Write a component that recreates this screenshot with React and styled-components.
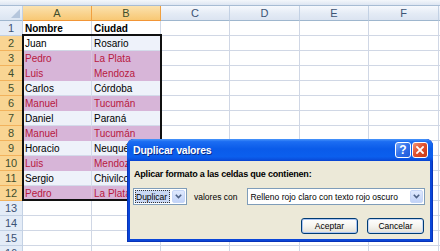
import React from "react"
import styled, {createGlobalStyle, css} from "styled-components"

const GlobalStyle = createGlobalStyle`
    html, body {
        margin: 0;
        padding: 0;
        background: #fff;
    }
    body {
        width: 440px;
        height: 251px;
        overflow: hidden;
        font-family: "Liberation Sans", Arial, sans-serif;
    }
`

const Sheet = styled.div`
    position: relative;
    width: 440px;
    height: 251px;
    overflow: hidden;
    display: flex;
    flex-direction: column;
`

const FormulaEdge = styled.div`
    flex: none;
    height: 5px;
    background: linear-gradient(#f4f7fb, #dde6f2);
    border-bottom: 1px solid #a7bcd4;
`

const Grid = styled.div`
    display: grid;
    grid-template-columns: 23px 69px 69px 69px 70px 69px 70px 1fr;
    grid-auto-rows: 15px;
`

const headerBase = css`
    box-sizing: border-box;
    display: flex;
    align-items: center;
    justify-content: center;
    font-size: 11px;
    overflow: hidden;
    color: ${p => (p.$active ? "#3f4e2c" : "#3d5375")};
    border-right: 1px solid ${p => (p.$active ? "#f0a040" : "#c3d1e4")};
    border-bottom: 1px solid ${p => (p.$active ? "#f29536" : "#9eb6ce")};
`

const Corner = styled.div`
    ${headerBase};
    position: relative;
    background: linear-gradient(#eef3fa, #dbe5f2);
    &::after {
        content: "";
        position: absolute;
        right: 2px;
        bottom: 2px;
        border-style: solid;
        border-width: 0 0 9px 9px;
        border-color: transparent transparent #b5c6dc transparent;
    }
`

const ColHeader = styled.div`
    ${headerBase};
    background: ${p =>
        p.$active
            ? "linear-gradient(#fbe2ae, #f9d38e 55%, #f8c874)"
            : "linear-gradient(#f6f9fd, #e4ebf5 55%, #dbe4f1)"};
`

const RowHeader = styled.div`
    ${headerBase};
    border-bottom-color: ${p => (p.$active ? "#f2b25c" : "#c3d1e4")};
    background: ${p => (p.$active ? "#f9d593" : "#e4ecf7")};
`

const fills = {
    white: {bg: "#ffffff", line: "#d0d7e5"},
    tint: {bg: "#eef2fa", line: "#d3dbea"},
    pink: {bg: "#d7b5d8", line: "#d7b5d8"}
}

const Cell = styled.div`
    box-sizing: border-box;
    display: flex;
    align-items: center;
    padding: 1px 0 0 2px;
    font-size: 10px;
    white-space: nowrap;
    overflow: hidden;
    font-weight: ${p => (p.$bold ? 700 : 400)};
    color: ${p => (p.$red ? "#b8193f" : "#000")};
    background: ${p => fills[p.$fill].bg};
    border-bottom: 1px solid ${p => fills[p.$fill].line};
    border-right: 1px solid ${p => (p.$fill === "pink" ? "#dbc4dd" : fills[p.$fill].line)};
`

const Selection = styled.div`
    position: absolute;
    left: 22px;
    top: 34px;
    width: 140px;
    height: 167px;
    box-sizing: border-box;
    border: 2px solid #101010;
    pointer-events: none;
`

const Dialog = styled.div`
    position: absolute;
    left: 127px;
    top: 139px;
    width: 306px;
    height: 103px;
    box-sizing: border-box;
    display: flex;
    flex-direction: column;
    padding: 0 3px 3px;
    background: #0a46d8;
    border-radius: 7px 7px 0 0;
    box-shadow: inset 1px 0 0 #0733b8, inset -1px 0 0 #0733b8, inset 0 -1px 0 #0733b8;
`

const TitleBar = styled.div`
    flex: none;
    height: 22px;
    margin: 0 -3px;
    padding: 0 5px 0 6px;
    display: flex;
    align-items: center;
    border-radius: 7px 7px 0 0;
    background: linear-gradient(#4a96fb 0%, #1c6df2 12%, #0a5be9 45%, #0b5fee 80%, #0a52e0 92%, #0841cf 100%);
`

const Title = styled.div`
    flex: 1;
    color: #fff;
    font-weight: 700;
    font-size: 10.5px;
    letter-spacing: -0.2px;
    text-shadow: 1px 1px 0 #0a2c8a;
`

const TitleButtons = styled.div`
    display: flex;
    gap: 1px;
`

const CapButton = styled.div`
    width: 16px;
    height: 16px;
    box-sizing: border-box;
    border: 1px solid #fff;
    border-radius: 3px;
    display: flex;
    align-items: center;
    justify-content: center;
    color: #fff;
    font-weight: 700;
    font-size: 12px;
    background: ${p =>
        p.$close
            ? "linear-gradient(135deg, #f0957a, #e0512f 45%, #c93a16)"
            : "linear-gradient(135deg, #7eaaf8, #3473ec 45%, #2059d8)"};
`

const Body = styled.div`
    flex: 1;
    background: #ece9d8;
    padding: 8px 5px 0 3px;
    display: flex;
    flex-direction: column;
`

const Prompt = styled.div`
    margin-left: 1px;
    height: 12px;
    font-size: 9px;
    font-weight: 700;
    letter-spacing: -0.2px;
    white-space: nowrap;
    color: #000;
`

const Controls = styled.div`
    margin-top: 7px;
    display: flex;
    align-items: center;
    height: 17px;
`

const Combo = styled.div`
    flex: none;
    box-sizing: border-box;
    width: ${p => p.$width}px;
    height: 17px;
    margin-left: ${p => p.$offset || 0}px;
    border: 1px solid #7f9db9;
    background: #fff;
    display: flex;
    align-items: center;
    padding: 1px;
`

const ComboText = styled.div`
    flex: 1;
    font-size: 8.5px;
    color: #000;
    padding-left: 1px;
    white-space: nowrap;
    overflow: hidden;
`

const FocusText = styled.div`
    flex: 1;
    height: 100%;
    box-sizing: border-box;
    display: flex;
    align-items: center;
    font-size: 8.5px;
    color: #000;
    background: #c9d8f4;
    outline: 1px dotted #333;
    outline-offset: -1px;
    padding-left: 1px;
    margin-right: 2px;
`

const Arrow = styled.div`
    flex: none;
    width: 13px;
    height: 13px;
    box-sizing: border-box;
    border-radius: 2px;
    border: 1px solid #c6d6f7;
    background: linear-gradient(#dfe9fd, #c2d3f8);
    display: flex;
    align-items: center;
    justify-content: center;
`

const Label = styled.div`
    flex: none;
    margin-left: 7px;
    font-size: 8.5px;
    white-space: nowrap;
    color: #000;
`

const Actions = styled.div`
    margin-top: 13px;
    padding-right: 1px;
    display: flex;
    justify-content: flex-end;
    gap: 9px;
`

const Button = styled.div`
    width: 57px;
    height: 16px;
    box-sizing: border-box;
    border: 1px solid #003c74;
    border-radius: 3px;
    display: flex;
    align-items: center;
    justify-content: center;
    font-size: 8.5px;
    color: #000;
    background: linear-gradient(#ffffff, #f5f4ef 50%, #e6e4dc 90%, #d8d4c8);
    box-shadow: inset 0 0 0 1px ${p => (p.$default ? "#a9c4f4" : "#c4d6f6")};
`

const Chevron = () => (
    <svg width="7" height="5" viewBox="0 0 7 5">
        <polyline points="0.8,0.8 3.5,3.6 6.2,0.8" fill="none" stroke="#4d6185" strokeWidth="1.6" />
    </svg>
)

const Cross = () => (
    <svg width="8" height="8" viewBox="0 0 8 8">
        <path d="M1 1 L7 7 M7 1 L1 7" stroke="#fff" strokeWidth="1.8" strokeLinecap="square" />
    </svg>
)

const columns = ["A", "B", "C", "D", "E", "F"]

const people = [
    ["Nombre", "Ciudad"],
    ["Juan", "Rosario"],
    ["Pedro", "La Plata"],
    ["Luis", "Mendoza"],
    ["Carlos", "Córdoba"],
    ["Manuel", "Tucumán"],
    ["Daniel", "Paraná"],
    ["Manuel", "Tucumán"],
    ["Horacio", "Neuquén"],
    ["Luis", "Mendoza"],
    ["Sergio", "Chivilcoy"],
    ["Pedro", "La Plata"]
]

const duplicates = [3, 4, 6, 8, 10, 12]

const App = () => {
    const rows = Array.from({length: 16}, (_, i) => i + 1)

    return (
        <Sheet>
            <GlobalStyle />
            <FormulaEdge />
            <Grid>
                <Corner />
                {columns.map(c => (
                    <ColHeader key={c} $active={c === "A" || c === "B"}>
                        {c}
                    </ColHeader>
                ))}
                <ColHeader />

                {rows.map(r => {
                    const inRange = r >= 2 && r <= 12
                    const dup = duplicates.includes(r)
                    const data = people[r - 1] || []
                    return (
                        <React.Fragment key={r}>
                            <RowHeader $active={inRange}>{r}</RowHeader>
                            {columns.map((c, i) => {
                                let fill = "white"
                                if (dup && i < 2) fill = "pink"
                                else if (inRange && i < 2 && !(r === 2 && i === 0)) fill = "tint"
                                return (
                                    <Cell key={c} $fill={fill} $red={dup} $bold={r === 1}>
                                        {i < 2 ? data[i] : null}
                                    </Cell>
                                )
                            })}
                            <Cell $fill="white" />
                        </React.Fragment>
                    )
                })}
            </Grid>

            <Selection />

            <Dialog>
                <TitleBar>
                    <Title>Duplicar valores</Title>
                    <TitleButtons>
                        <CapButton>?</CapButton>
                        <CapButton $close>
                            <Cross />
                        </CapButton>
                    </TitleButtons>
                </TitleBar>
                <Body>
                    <Prompt>Aplicar formato a las celdas que contienen:</Prompt>
                    <Controls>
                        <Combo $width={54}>
                            <FocusText>Duplicar</FocusText>
                            <Arrow>
                                <Chevron />
                            </Arrow>
                        </Combo>
                        <Label>valores con</Label>
                        <Combo $width={178} $offset={10}>
                            <ComboText>Relleno rojo claro con texto rojo oscuro</ComboText>
                            <Arrow>
                                <Chevron />
                            </Arrow>
                        </Combo>
                    </Controls>
                    <Actions>
                        <Button $default>Aceptar</Button>
                        <Button>Cancelar</Button>
                    </Actions>
                </Body>
            </Dialog>
        </Sheet>
    )
}

export default App
